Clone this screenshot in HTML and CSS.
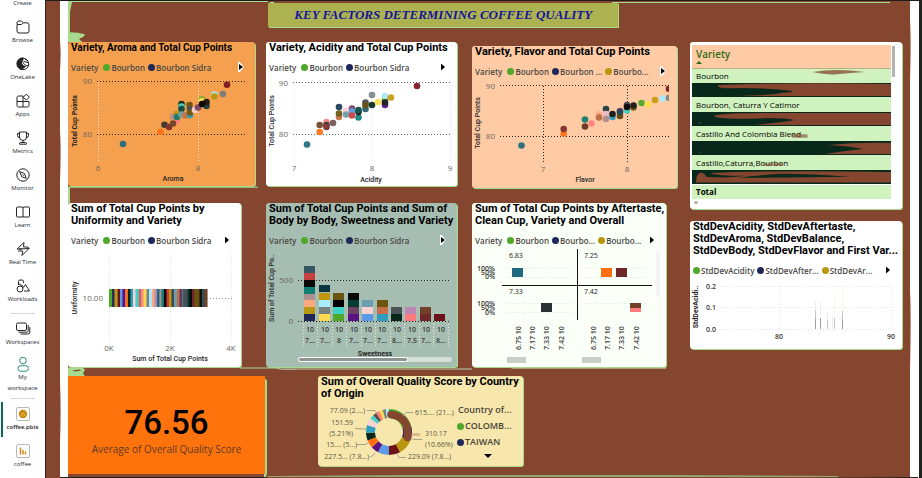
FILE: index.html
```html
<!DOCTYPE html>
<html lang="en">
<head>
<meta charset="utf-8">
<title>Key factors determining coffee quality</title>
<link rel="stylesheet" href="styles.css">
</head>
<body>
<nav class="rail" aria-label="Main">
  <a class="item first" href="#">Create</a>
  <a class="item" href="#"><svg viewBox="0 0 16 16"><path d="M2 5V4a2 2 0 0 1 2-2h2.500l1.800 1.800H12a2 2 0 0 1 2 2V12a2 2 0 0 1-2 2H4a2 2 0 0 1-2-2V5.500h4.500l1.800-1.700"/></svg>Browse</a>
  <a class="item" href="#"><svg viewBox="0 0 16 16"><circle cx="8" cy="8" r="5.700"/><path class="solid" d="M2 8.500C1.500 4 5 1.500 8.500 2L6.500 5c-.5 3 1 5 4 5.500l-4 3C4 13 2.300 11 2 8.500z"/><path d="M8 2.500c-1 4 1 7 5.500 7.500M10 3l2.500 1.500M9 5.500l4 1"/></svg>OneLake</a>
  <a class="item" href="#"><svg viewBox="0 0 16 16"><path d="M8 14H3.500A1.500 1.500 0 0 1 2 12.500v-8A1.500 1.500 0 0 1 3.500 3H8v11h4.500a1.500 1.500 0 0 0 1.500-1.500V8.500H2M11.300 1.200l3 3-3 3-3-3z"/></svg>Apps</a>
  <a class="item" href="#"><svg viewBox="0 0 16 16"><path d="M4.500 2h7v5a3.500 3.500 0 0 1-7 0zM4.500 3.500h-2v2a2.500 2.500 0 0 0 2.200 2.300M11.500 3.500h2v2a2.500 2.500 0 0 1-2.200 2.300M8 10.500v2M4.500 14.200v-.4a1.300 1.300 0 0 1 1.300-1.300h4.400a1.300 1.300 0 0 1 1.300 1.300v.4z"/></svg>Metrics</a>
  <a class="item" href="#"><svg viewBox="0 0 16 16"><circle cx="8" cy="8" r="6.200"/><path d="M4.700 4.700l4.600 1.600 2 5-4.600-1.600zM7.300 7.300l1.400 1.400"/></svg>Monitor</a>
  <a class="item" href="#"><svg viewBox="0 0 16 16"><path d="M8 3.500V13H2.500a1 1 0 0 1-1-1V4a1 1 0 0 1 1-1H7l1 .5 1-.5h4.500a1 1 0 0 1 1 1v8a1 1 0 0 1-1 1H8"/></svg>Learn</a>
  <a class="item" href="#"><svg viewBox="0 0 16 16"><path d="M9 1.500L2 8h4.500l-2 0L14 7.500 7 14.500l.7-4.500H3M9 1.500L8.500 6H13l1 1.500"/></svg>Real Time</a>
  <a class="item last" href="#"><svg viewBox="0 0 16 16"><circle cx="5" cy="11" r="3"/><path d="M3.500 7V3.500A1.500 1.500 0 0 1 5 2h2a1.500 1.500 0 0 1 1.500 1.500V5M10.500 6.500l4 6.500H9M10.500 6.500L8.500 9.500M3.500 5.500l5 3"/></svg>Workloads</a>
  <a class="item ruled" href="#"><svg viewBox="0 0 16 16"><rect x="1.500" y="2" width="10" height="7.500" rx="1.500"/><path d="M13.200 4v5.500a1.700 1.700 0 0 1-1.700 1.700H3.500M14.800 6v5a2 2 0 0 1-2 2H5.500"/></svg>Workspaces</a>
  <a class="item" href="#"><svg class="teal" viewBox="0 0 16 16"><circle cx="8" cy="4.500" r="3.300"/><rect x="3" y="9.700" width="10.500" height="5.500" rx="2.700"/></svg>My<br>workspace</a>
  <a class="item ruled current" href="#"><svg viewBox="0 0 16 16"><rect class="tile" x="1.500" y="1.500" width="13" height="13" rx="1.500"/><circle cx="8" cy="8" r="4.200" fill="#c8860d" stroke="none"/><path d="M5.500 9.500l4-3.500M8 10.500l2.500-2" stroke="#f3c95f"/></svg>coffee.pbix</a>
  <a class="item" href="#"><svg viewBox="0 0 16 16"><rect class="tile" x="1.500" y="1.500" width="13" height="13" rx="1.500"/><path d="M5.500 4.500v7M8 7v4.500M10.500 8.500v3" stroke="#d08a1c" stroke-width="1.500"/></svg>coffee</a>
</nav>

<main class="report">
  <svg class="paint" viewBox="46 0 876 478" preserveAspectRatio="none" aria-hidden="true">
    <rect x="46" y="0" width="876" height="478" fill="#85462f"/>
    <path d="M60 1h8v474h-8z" fill="#fff"/>
    <path d="M910 1h9v475h-9z" fill="#fff"/>
    <path d="M919 0h3v478h-3z" fill="#202320"/>
    <path d="M46 0h876v1H46z" fill="#231c1a"/>
    <path d="M68 1h200v1H72l-2 10v20q8 0 15 2-1 3-5 4-2 1 3 4H68zM270 2h4v2h-4zM612 2h278v1H618l-2 4q0 1-2 0z" fill="#a6db8e"/>
    <path d="M68 186h190v1H70v16h-2zM68 366h14l3 2-2 4 3 4H68zM240 366h37q0-1 3 0v1H240zM265 377l2 2v92l-1 4h-2V377z" fill="#a6db8e"/>
    <path d="M277 367h25l170 0v1H300q-20 1-25-1z" fill="#b7cfae"/>
    <path d="M510 366h156v1H512z" fill="#d9f3cf"/>
    <path d="M72 369l8-1 1 1-6 1z" fill="#85462f"/>
    <path d="M60 475h204l4 1h540l110-1v1l-110 2H260l-20-1H62z" fill="#231c1a"/>
    <path d="M268 474l140-1 250 0 180 1v1H268z" fill="#93a873"/>
    <path d="M60 40q2 14 0 30zM60 130q2 20 0 50zM60 380q2 30 0 60zM910 20q2 20 0 60zM910 290q2 20 0 80z" fill="#c98f80"/>
  </svg>

  <h1 class="banner">KEY FACTORS DETERMINING COFFEE QUALITY</h1>

  <div class="board">
    <div class="left">
      <div class="row top">
        <section class="panel orange">
          <h2 class="compact">Variety, Aroma and Total Cup Points</h2>
          <div class="legend"><span class="name">Variety</span><span class="key green">Bourbon</span><span class="key navy">Bourbon Sidra</span><button class="next halo" aria-label="Next"></button></div>
          <svg class="chart" viewBox="68 73 187 113">
            <path class="grid dark" d="M97 81.500h150M97 134.500h150"/><path class="grid light" d="M98.500 82v80M198.500 82v80"/>
            <text x="92" y="84" class="tick end">90</text><text x="92" y="137" class="tick end">80</text>
            <text x="98" y="171" class="tick mid">6</text><text x="198" y="171" class="tick mid">8</text>
            <text x="173" y="181" class="axis mid">Aroma</text><text class="axis mid bold" transform="translate(77 121) rotate(-90)">Total Cup Points</text>
            <g class="dots">
            <circle cx="123" cy="144" r="3.300" fill="#1f6a80"/><circle cx="160.500" cy="131.700" r="3.300" fill="#ff6f0f"/><circle cx="164.500" cy="124.700" r="3.300" fill="#333"/><circle cx="169" cy="127" r="3.300" fill="#7a2a2a"/><circle cx="177" cy="121" r="3.300" fill="#ff8080"/><circle cx="173" cy="123.500" r="3.300" fill="#704028"/><circle cx="173" cy="116.500" r="3.300" fill="#b59090"/><circle cx="176.500" cy="114" r="3.300" fill="#b8960f"/><circle cx="177" cy="117" r="3.300" fill="#107a6e"/><circle cx="181.500" cy="104" r="3.300" fill="#07281a"/><circle cx="181.500" cy="106.500" r="3.300" fill="#3dcfc0"/><circle cx="181.500" cy="109" r="3.300" fill="#034a42"/><circle cx="181.500" cy="114.500" r="3.300" fill="#6b9ba8"/><circle cx="185.500" cy="115.500" r="3.300" fill="#c86e44"/><circle cx="190" cy="115" r="3.300" fill="#239cc4"/><circle cx="189.500" cy="105" r="3.300" fill="#6a5410"/><circle cx="190" cy="109.500" r="3.300" fill="#34495e"/><circle cx="190" cy="112.500" r="3.300" fill="#6a5410"/><circle cx="195" cy="110" r="3.300" fill="#ffd2d2"/><circle cx="198" cy="107.500" r="3.300" fill="#73406a"/><circle cx="202" cy="99.500" r="3.300" fill="#4fa82a"/><circle cx="202" cy="101" r="3.300" fill="#ffe14a"/><circle cx="206.500" cy="106" r="3.300" fill="#173b40"/><circle cx="206.500" cy="102" r="3.300" fill="#111"/><circle cx="202" cy="104" r="3.300" fill="#000"/><circle cx="214.500" cy="94.500" r="3.300" fill="#a8e8f5"/><circle cx="214.500" cy="96.500" r="3.300" fill="#b8960f"/><circle cx="223" cy="94" r="3.300" fill="#7a7a7a"/><circle cx="227" cy="84.700" r="3.300" fill="#7a1420"/>
            </g>
          </svg>
        </section>
        <section class="panel white">
          <h2>Variety, Acidity and Total Cup Points</h2>
          <div class="legend"><span class="name">Variety</span><span class="key green">Bourbon</span><span class="key navy">Bourbon Sidra</span><button class="next" aria-label="Next"></button></div>
          <svg class="chart" viewBox="266 73 191 113">
            <path class="grid dark" d="M293 82.500h157M293 134.500h157" stroke-opacity=".7"/><path class="grid faint" d="M294.500 82v80M372.500 82v80M450.500 82v80"/>
            <text x="288" y="86" class="tick end">90</text><text x="288" y="137" class="tick end">80</text>
            <text x="294" y="171" class="tick mid">7</text><text x="372" y="171" class="tick mid">8</text><text x="450" y="171" class="tick mid">9</text>
            <text x="371" y="182" class="axis mid">Acidity</text><text class="axis mid" transform="translate(274 121) rotate(-90)">Total Cup Points</text>
            <g class="dots">
            <circle cx="307" cy="144.500" r="3.300" fill="#1f6a80"/><circle cx="319.700" cy="132" r="3.300" fill="#ff6f0f"/><circle cx="319.700" cy="125" r="3.300" fill="#704028"/><circle cx="326.500" cy="122" r="3.300" fill="#ff8080"/><circle cx="326.500" cy="125" r="3.300" fill="#333"/><circle cx="326.500" cy="127" r="3.300" fill="#7a2a2a"/><circle cx="333" cy="123" r="3.300" fill="#6e5454"/><circle cx="339" cy="117" r="3.300" fill="#c86e44"/><circle cx="339" cy="107" r="3.300" fill="#173b50"/><circle cx="339" cy="113.500" r="3.300" fill="#6a5410"/><circle cx="346" cy="110.500" r="3.300" fill="#ffd2d2"/><circle cx="346" cy="114.500" r="3.300" fill="#6b9ba8"/><circle cx="352" cy="108.500" r="3.300" fill="#73406a"/><circle cx="352" cy="111.500" r="3.300" fill="#5894dc"/><circle cx="352" cy="115.500" r="3.300" fill="#c83a3f"/><circle cx="358.500" cy="117.500" r="3.300" fill="#0d8078"/><circle cx="358.500" cy="112" r="3.300" fill="#111"/><circle cx="358.500" cy="110" r="3.300" fill="#034a42"/><circle cx="365.500" cy="102.500" r="3.300" fill="#444a50"/><circle cx="365.500" cy="109" r="3.300" fill="#235a68"/><circle cx="365.500" cy="105" r="3.300" fill="#5a4208"/><circle cx="372" cy="95" r="3.300" fill="#7d8488"/><circle cx="372" cy="105" r="3.300" fill="#07281a"/><circle cx="378" cy="102" r="3.300" fill="#ffe14a"/><circle cx="385" cy="99.500" r="3.300" fill="#4fa82a"/><circle cx="385" cy="96" r="3.300" fill="#a8e8f5"/><circle cx="385" cy="105" r="3.300" fill="#551080"/><circle cx="385" cy="102.500" r="3.300" fill="#111"/><circle cx="391" cy="97.500" r="3.300" fill="#c89a0f"/><circle cx="417" cy="86" r="3.300" fill="#7a1420"/>
            </g>
          </svg>
        </section>
        <section class="panel peach">
          <h2>Variety, Flavor and Total Cup Points</h2>
          <div class="legend"><span class="name">Variety</span><span class="key green">Bourbon</span><span class="key navy">Bourbon ...</span><span class="key gold">Bourbo...</span><button class="next halo" aria-label="Next"></button></div>
          <svg class="chart" viewBox="472 77 205 111">
            <path class="grid dark" d="M500 85.500h169M500 136.500h169M543.500 86v78M627.500 86v78"/>
            <text x="495" y="89" class="tick end">90</text><text x="495" y="139" class="tick end">80</text>
            <text x="543" y="172" class="tick mid">7</text><text x="627" y="172" class="tick mid">8</text>
            <text x="585" y="182" class="axis mid">Flavor</text><text class="axis mid" transform="translate(480 123) rotate(-90)">Total Cup Points</text>
            <svg x="472" y="77" width="197" height="100" viewBox="472 77 197 100"><g class="dots">
            <circle cx="521.500" cy="145.500" r="3.300" fill="#1f6a80"/><circle cx="563.700" cy="133.500" r="3.300" fill="#ff6f0f"/><circle cx="563.700" cy="129" r="3.300" fill="#7a2a2a"/><circle cx="585" cy="119.500" r="3.300" fill="#107a6e"/><circle cx="585" cy="126.500" r="3.300" fill="#5f3020"/><circle cx="591.500" cy="123.500" r="3.300" fill="#ff8080"/><circle cx="599" cy="114.500" r="3.300" fill="#ffa480"/><circle cx="599" cy="117.500" r="3.300" fill="#b8683f"/><circle cx="606" cy="109" r="3.300" fill="#173b40"/><circle cx="606" cy="114" r="3.300" fill="#e3bccc"/><circle cx="606" cy="119" r="3.300" fill="#ad8b8f"/><circle cx="612.500" cy="117" r="3.300" fill="#239cc4"/><circle cx="612.500" cy="114" r="3.300" fill="#111"/><circle cx="620" cy="111" r="3.300" fill="#73406a"/><circle cx="620" cy="116" r="3.300" fill="#5a4208"/><circle cx="620" cy="112" r="3.300" fill="#173b50"/><circle cx="627" cy="110.500" r="3.300" fill="#3dcfc0"/><circle cx="627" cy="105" r="3.300" fill="#445"/><circle cx="627" cy="107" r="3.300" fill="#000"/><circle cx="633.500" cy="107.500" r="3.300" fill="#6a5410"/><circle cx="633.500" cy="105.500" r="3.300" fill="#111"/><circle cx="641.500" cy="103" r="3.300" fill="#4fa82a"/><circle cx="648" cy="104.500" r="3.300" fill="#ffe14a"/><circle cx="655" cy="100" r="3.300" fill="#c89a0f"/><circle cx="662.500" cy="98.500" r="3.300" fill="#a8ecff"/><circle cx="669" cy="98" r="3.300" fill="#7d8488"/><circle cx="669" cy="88.700" r="3.300" fill="#7a1420"/>
            </g></svg>
          </svg>
        </section>
      </div>

      <div class="row middle">
        <section class="panel white narrow">
          <h2>Sum of Total Cup Points by<br>Uniformity and Variety</h2>
          <div class="legend"><span class="name">Variety</span><span class="key green">Bourbon</span><span class="key navy">Bourbon Sidra</span><button class="next" aria-label="Next"></button></div>
          <svg class="chart" viewBox="68 246 173 121">
            <path class="grid faint" d="M109.500 254v88M170.500 254v88M231.500 254v88"/><path class="grid dark" d="M207 298.500h25" stroke-opacity=".5"/>
            <text x="103" y="301" class="tick end">10.00</text>
            <text x="109" y="351" class="tick mid">0K</text><text x="170" y="351" class="tick mid">2K</text><text x="231" y="351" class="tick mid">4K</text>
            <text x="170" y="361" class="axis mid">Sum of Total Cup Points</text><text class="axis mid" transform="translate(77 298) rotate(-90)">Uniformity</text>
            <g stroke-width="3.100" fill="none">
            <path stroke="#4fa82a" d="M110.500 289v18"/><path stroke="#1f2858" d="M113.600 289v18"/><path stroke="#b8960f" d="M116 289v18"/><path stroke="#6e1018" d="M119 289v18"/><path stroke="#5b9ae6" d="M121.600 289v18"/><path stroke="#5a1280" d="M124 289v18"/><path stroke="#ff6f0f" d="M127 289v18"/><path stroke="#07281a" d="M129.500 289v18"/><path stroke="#2c9cc0" d="M132 289v18"/><path stroke="#fad2d2" d="M134.500 289v18"/><path stroke="#40d2c8" d="M137 289v18"/><path stroke="#b06a68" d="M140 289v18"/><path stroke="#ff8a80" d="M142.500 289v18"/><path stroke="#ffd94d" d="M145 289v18"/><path stroke="#777f80" d="M148 289v18"/><path stroke="#a9e9fa" d="M150.500 289v18"/><path stroke="#ffa880" d="M153.500 289v18"/><path stroke="#b88ab0" d="M156 289v18"/><path stroke="#1f6a80" d="M158.500 289v18"/><path stroke="#ad9090" d="M161 289v18"/><path stroke="#108074" d="M163 289v18"/><path stroke="#080808" d="M165.500 289v18"/><path stroke="#c83a3f" d="M168 289v18"/><path stroke="#c0960f" d="M170.500 289v18"/><path stroke="#364c58" d="M173 289v18"/><path stroke="#6aa0ac" d="M176 289v18"/><path stroke="#c86e4a" d="M178.500 289v18"/><path stroke="#5e3c60" d="M181 289v18"/><path stroke="#3b5860" d="M184 289v18"/><path stroke="#4e4e52" d="M186.500 289v18"/><path stroke="#033c35" d="M189 289v18"/><path stroke="#080808" d="M191 289v18"/><path stroke="#6c2a28" d="M193.500 289v18"/><path stroke="#6a5410" d="M196 289v18"/><path stroke="#6a5410" d="M198.500 289v18"/><path stroke="#111" d="M201 289v18"/><path stroke="#345058" d="M203.500 289v18"/><path stroke="#704028" d="M206 289v18"/>
            </g>
          </svg>
        </section>
        <section class="panel sage">
          <h2>Sum of Total Cup Points and Sum of<br>Body by Body, Sweetness and Variety</h2>
          <div class="legend"><span class="name">Variety</span><span class="key green">Bourbon</span><span class="key navy">Bourbon Sidra</span><button class="next halo" aria-label="Next"></button></div>
          <svg class="chart" viewBox="266 246 191 121">
            <path class="grid dark" d="M298 280.500h153M298 321.500h153"/>
            <path class="grid light" d="M303.500 324v24M317.500 324v24M332.500 324v24M346.500 324v24M361.500 324v24M375.500 324v24M390.500 324v24M404.500 324v24M419.500 324v24M433.500 324v24M448.500 324v24"/>
            <text x="293" y="283" class="tick end">500</text><text x="293" y="324" class="tick end">0</text>
            <text class="axis mid" transform="translate(274 288) rotate(-90)">Sum of Total Cup Po..</text>
            <path fill="#1f2858" d="M304 314h11v7h-11z"/><path fill="#b8960f" d="M304 307h11v7h-11z"/><path fill="#ffa880" d="M304 300h11v7h-11z"/><path fill="#ad9090" d="M304 294h11v6h-11z"/><path fill="#108074" d="M304 287h11v7h-11z"/><path fill="#080808" d="M304 280h11v7h-11z"/><path fill="#c83f42" d="M304 273h11v7h-11z"/><path fill="#345860" d="M304 266h11v7h-11z"/>
            <path fill="#ffd94d" d="M319 314h11v7h-11z"/><path fill="#777f80" d="M319 307h11v7h-11z"/><path fill="#a8ecff" d="M319 300h11v7h-11z"/><path fill="#c0960f" d="M319 293h11v7h-11z"/><path fill="#0b3440" d="M319 285h11v7h-11z"/>
            <path fill="#4fa82a" d="M333 314h11v7h-11z"/><path fill="#40d2c8" d="M333 307h11v7h-11z"/><path fill="#000" d="M333 300h11v7h-11z"/><path fill="#6a5410" d="M333 293h11v7h-11z"/>
            <path fill="#5a1280" d="M348 314h11v7h-11z"/><path fill="#6e4263" d="M348 307h11v7h-11z"/><path fill="#033c35" d="M348 300h11v7h-11z"/><path fill="#080808" d="M348 293h11v7h-11z"/>
            <path fill="#5b9ae6" d="M362 314h11v7h-11z"/><path fill="#fad2d2" d="M362 307h11v7h-11z"/><path fill="#6aa0b2" d="M362 300h11v7h-11z"/>
            <path fill="#2c9cc0" d="M377 314h11v7h-11z"/><path fill="#c86e4a" d="M377 307h11v7h-11z"/><path fill="#6a5410" d="M377 300h11v7h-11z"/>
            <path fill="#07281a" d="M391 314h11v7h-11z"/><path fill="#4b5459" d="M391 307h11v7h-11z"/>
            <path fill="#ff7a7a" d="M405 314h11v7h-11z"/><path fill="#be86b4" d="M405 307h11v7h-11z"/>
            <path fill="#6e2628" d="M420 314h11v7h-11z"/><path fill="#704028" d="M420 307h11v7h-11z"/>
            <path fill="#6e1018" d="M434 314h11v7h-11z"/>
            <g class="tick mid strong"><text x="310" y="332">10</text><text x="325" y="332">10</text><text x="339" y="332">10</text><text x="354" y="332">10</text><text x="368" y="332">10</text><text x="382" y="332">10</text><text x="397" y="332">10</text><text x="412" y="332">10</text><text x="426" y="332">10</text><text x="441" y="332">10</text>
            <text x="310" y="343">7...</text><text x="325" y="343">7...</text><text x="339" y="343">8</text><text x="354" y="343">7...</text><text x="368" y="343">7...</text><text x="382" y="343">7...</text><text x="397" y="343">8...</text><text x="412" y="343">7.5</text><text x="426" y="343">7...</text><text x="441" y="343">8...</text></g>
            <text x="375" y="356" class="axis mid bold">Sweetness</text>
            <rect x="298" y="357" width="154" height="5" rx="2.500" fill="#d5dfd9"/><rect x="298.500" y="357.500" width="109" height="4" rx="2" fill="#8f9592" stroke="#fff"/>
          </svg>
        </section>
        <section class="panel mint">
          <h2>Sum of Total Cup Points by Aftertaste,<br>Clean Cup, Variety and Overall</h2>
          <div class="legend"><span class="name">Variety</span><span class="key green">Bourbon</span><span class="key navy">Bourbo...</span><span class="key gold">Bourbo...</span><button class="next" aria-label="Next"></button></div>
          <svg class="chart" viewBox="472 246 194 121">
            <path d="M502 285.500h150M577.500 249v71" stroke="#111"/>
            <path d="M656 250h4v46h-4z" fill="#f3f5f7"/>
            <g class="tick small"><text x="509" y="258">6.83</text><text x="584" y="258">7.25</text><text x="509" y="294">7.33</text><text x="584" y="294">7.42</text></g>
            <g class="tick end strong"><text x="495" y="271">100%</text><text x="495" y="275">50%</text><text x="495" y="279">0%</text><text x="495" y="306">100%</text><text x="495" y="310">50%</text><text x="495" y="315">0%</text></g>
            <path class="grid faint" d="M507 268.500h65M507 277.500h65M582 268.500h65M582 277.500h65M507 303.500h65M507 312.500h65M582 303.500h65"/>
            <path d="M512 268h11v9h-11z" fill="#1f6a80"/><path d="M601 268h11v9h-11z" fill="#ff6f0f"/><path d="M616 268h11v9h-11z" fill="#6e2628"/><path d="M541 303h11v9h-11z" fill="#2b3234"/><path d="M630 303h11v5h-11z" fill="#704028"/><path d="M630 308h11v4h-11z" fill="#ff7a7a"/>
            <g class="tick strong"><text transform="translate(521 350) rotate(-90)">6.75 10</text><text transform="translate(535 350) rotate(-90)">7.17 10</text><text transform="translate(549 350) rotate(-90)">7.33 10</text><text transform="translate(564 350) rotate(-90)">7.42 10</text><text transform="translate(596 350) rotate(-90)">6.75 10</text><text transform="translate(610 350) rotate(-90)">7.17 10</text><text transform="translate(624 350) rotate(-90)">7.33 10</text><text transform="translate(639 350) rotate(-90)">7.42 10</text></g>
            <path d="M507 357h19v6h-19zM582 357h19v6h-19z" fill="#c9cdc8"/>
          </svg>
        </section>
      </div>

      <div class="row bottom">
        <section class="score">
          <strong>76.56</strong>
          <span>Average of Overall Quality Score</span>
        </section>
        <section class="panel cream">
          <h2>Sum of Overall Quality Score by Country<br>of Origin</h2>
          <div class="donut">
            <svg class="chart" viewBox="318 401 139 66">
              <g fill="none" stroke-width="9" transform="rotate(-90 389 433)">
                <circle pathLength="100" cx="389" cy="433" r="18.500" stroke="#4fa82a" stroke-dasharray="21.200 100"/>
                <circle pathLength="100" cx="389" cy="433" r="18.500" stroke="#1f2858" stroke-dasharray="10 100" stroke-dashoffset="-21"/>
                <circle pathLength="100" cx="389" cy="433" r="18.500" stroke="#b8960f" stroke-dasharray="11 100" stroke-dashoffset="-31"/>
                <circle pathLength="100" cx="389" cy="433" r="18.500" stroke="#6e1018" stroke-dasharray="8 100" stroke-dashoffset="-42"/>
                <circle pathLength="100" cx="389" cy="433" r="18.500" stroke="#5b9ae6" stroke-dasharray="8 100" stroke-dashoffset="-50"/>
                <circle pathLength="100" cx="389" cy="433" r="18.500" stroke="#5a1280" stroke-dasharray="5.500 100" stroke-dashoffset="-58"/>
                <circle pathLength="100" cx="389" cy="433" r="18.500" stroke="#ff6f0f" stroke-dasharray="5.500 100" stroke-dashoffset="-63.500"/>
                <circle pathLength="100" cx="389" cy="433" r="18.500" stroke="#07281a" stroke-dasharray="5.500 100" stroke-dashoffset="-69"/>
                <circle pathLength="100" cx="389" cy="433" r="18.500" stroke="#2c9cc0" stroke-dasharray="5.500 100" stroke-dashoffset="-74.500"/>
                <circle pathLength="100" cx="389" cy="433" r="18.500" stroke="#fad2d2" stroke-dasharray="5 100" stroke-dashoffset="-80"/>
                <circle pathLength="100" cx="389" cy="433" r="18.500" stroke="#40d2c8" stroke-dasharray="3 100" stroke-dashoffset="-85"/>
                <circle pathLength="100" cx="389" cy="433" r="18.500" stroke="#5c4a4a" stroke-dasharray="2.500 100" stroke-dashoffset="-88"/>
                <circle pathLength="100" cx="389" cy="433" r="18.500" stroke="#ff7a7a" stroke-dasharray="2.500 100" stroke-dashoffset="-90.500"/>
                <circle pathLength="100" cx="389" cy="433" r="18.500" stroke="#ffd94d" stroke-dasharray="2.500 100" stroke-dashoffset="-93"/>
                <circle pathLength="100" cx="389" cy="433" r="18.500" stroke="#777f80" stroke-dasharray="2.200 100" stroke-dashoffset="-95.500"/>
                <circle pathLength="100" cx="389" cy="433" r="18.500" stroke="#a8ecff" stroke-dasharray="2.300 100" stroke-dashoffset="-97.700"/>
              </g>
              <path d="M391 415.500q14 2 16.500 14v9" fill="none" stroke="#85462f" stroke-width="7.500" stroke-linecap="round"/>
              <path d="M413 435.500h6" stroke="#d9a384" stroke-width="3" stroke-linecap="round" opacity=".7"/>
              <path d="M367 411.500h8l2 3M403 417l3-3.500h7M355 429.500l11 .5M411 439l3 1.500h8M357 445.500h8l3-1.500M370 458l3-1.500 2-3M397 455l2 3.500h7" fill="none" stroke="#a8a08a"/>
              <g class="callout"><text x="365" y="414" class="end">77.09 (2....)</text><text x="353" y="426" class="end">151.59</text><text x="353" y="437" class="end">(5.21%)</text><text x="357" y="448" class="end">15.... (5...)</text><text x="369" y="460" class="end">227.5... (7.8...)</text><text x="415" y="416">615.... (21...)</text><text x="425" y="437">310.17</text><text x="425" y="448">(10.66%)</text><text x="408" y="460">229.09 (7.8...)</text></g>
            </svg>
            <div class="countries">
              <span class="name">Country of...</span>
              <span class="key green">COLOMB...</span>
              <span class="key navy">TAIWAN</span>
              <button class="next down" aria-label="More"></button>
            </div>
          </div>
        </section>
      </div>
    </div>

    <div class="right">
      <section class="panel tablebox">
        <table>
          <thead><tr><th scope="col">Variety<svg viewBox="0 0 6 3"><path d="M0 3l3-3 3 3z" fill="#2f6b16"/></svg></th></tr></thead>
          <tbody>
            <tr><td><span>Bourbon</span><svg class="smear" viewBox="692 68 198 14" preserveAspectRatio="none"><path d="M812 71q22-4 52 0-14 1-28 2-10 1-24-2z" fill="#85462f" opacity=".75"/></svg></td></tr>
            <tr class="ink"><td><svg class="smear" viewBox="0 0 198 14" preserveAspectRatio="none"><path d="M26 2q80-3 172-1v12H36q50-1 52-3 14-1 12-2-20-3-54-3-22 1-20-3z" fill="#85462f"/></svg></td></tr>
            <tr><td><span>Bourbon, Caturra Y Catimor</span></td></tr>
            <tr class="ink"><td><svg class="smear" viewBox="0 0 198 14" preserveAspectRatio="none"><path d="M22 4q4-3 64-3h112v12H62q30-3 40-5-8-2-26-2-52 2-54-2zM8 12q-2-2 1-2z" fill="#85462f"/></svg></td></tr>
            <tr><td><span>Castillo And Colombia Blend</span><svg class="smear" viewBox="0 0 198 14" preserveAspectRatio="none"><path d="M98 8q10-1 17 0v3h-15z" fill="#85462f" opacity=".6"/></svg></td></tr>
            <tr class="ink"><td><svg class="smear" viewBox="0 0 198 14" preserveAspectRatio="none"><path d="M136 4q30-3 62-2v11h-66q26-4 38-5-12-3-34-4zM7 12q0-2 2-1z" fill="#85462f"/></svg></td></tr>
            <tr><td><span>Castillo,Caturra,Bourbon</span><svg class="smear" viewBox="0 0 198 14" preserveAspectRatio="none"><path d="M70 8h20v2H72z" fill="#85462f" opacity=".6"/></svg></td></tr>
            <tr class="ink"><td><svg class="smear" viewBox="0 0 198 14" preserveAspectRatio="none"><path d="M4 13q0-11 6-10 4 1 4 4 20 2 40-1-30 0-36-3 60-3 180-1v11z" fill="#85462f"/><path d="M48 8q50 0 110-1-40-3-70-3-30 2-40 4z" fill="#07281a"/></svg></td></tr>
          </tbody>
          <tfoot><tr><th scope="row">Total</th></tr></tfoot>
        </table>
        <span class="bar"></span>
        <span class="knob"></span>
      </section>
      <section class="panel white">
        <h2>StdDevAcidity, StdDevAftertaste,<br>StdDevAroma, StdDevBalance,<br>StdDevBody, StdDevFlavor and First Var...</h2>
        <div class="legend"><span class="key green">StdDevAcidity</span><span class="key navy">StdDevAfter...</span><span class="key gold">StdDevAr...</span><button class="next" aria-label="Next"></button></div>
        <svg class="chart" viewBox="690 276 212 73">
          <path class="grid faint" d="M721 286.500h171M721 307.500h171M721 329.500h171M779.500 286v44M891.500 286v44"/>
          <g class="tick strong end"><text x="716" y="289">0.2</text><text x="716" y="310">0.1</text><text x="716" y="332">0.0</text></g>
          <g class="tick strong mid"><text x="779" y="339">80</text><text x="891" y="339">90</text></g>
          <text class="axis mid bold" transform="translate(698 307) rotate(-90)">StdDevAcidi..</text>
          <path d="M815.500 302v8M820.500 302v14M827.500 312v8" stroke="#f0eaf6"/><path d="M834.500 292v24M842.500 287v24" stroke="#fbf8e2"/><path d="M832.500 316v12" stroke="#e8f4e8"/>
          <path d="M815.500 310v9M842.500 311v10M827.500 320v9M834.500 318v11" stroke="#c9c5c8"/><path d="M815.500 319v10M842.500 319v10M820.500 318v11" stroke="#a39aa4"/>
        </svg>
      </section>
    </div>
  </div>
</main>
</body>
</html>
```
FILE: styles.css
```css
* {
  box-sizing: border-box;
}

body {
  margin: 0;
  display: flex;
  min-height: 100vh;
  overflow: hidden;
  font-family: "Open Sans", "Noto Sans", sans-serif;
  font-size: 8px;
  color: #252423;
}

button {
  padding: 0;
  border: 0;
  background: none;
}

/* navigation rail */
.rail {
  flex: 0 0 46px;
  display: flex;
  flex-direction: column;
  border-right: 1px solid #2a2220;
  background: #fff;
}

.item {
  position: relative;
  display: block;
  margin-bottom: 10px;
  font-size: 6px;
  line-height: 11px;
  text-align: center;
  text-decoration: none;
  color: #24282e;
}

.item.first {
  margin-top: -2px;
}

.item.last {
  margin-bottom: 8px;
}

.item svg {
  display: block;
  width: 16px;
  height: 16px;
  margin: 0 auto;
  fill: none;
  stroke: #242424;
  stroke-width: 1;
}

.item .solid {
  fill: #242424;
}

.item svg.teal {
  stroke: #2b8a78;
}

.item .tile {
  fill: #fff;
  stroke: #b8b8b8;
}

.item.ruled {
  padding-top: 8px;
}

.item.ruled::after {
  content: "";
  position: absolute;
  top: 0;
  left: 11px;
  right: 10px;
  border-top: 1px solid #d6d6d6;
}

.item.ruled:not(.current) {
  margin-bottom: 8px;
}

.item:has(.teal) {
  margin-bottom: 4px;
}

.item.current {
  font-weight: 600;
  color: #1b1b1b;
}

.item.current::before {
  content: "";
  position: absolute;
  top: 4px;
  bottom: -4px;
  left: 1px;
  width: 2px;
  background: #0b6a55;
}

/* report canvas */
.report {
  position: relative;
  flex: 1;
  min-width: 0;
  padding: 3px 20px 0 22px;
}

.paint {
  position: absolute;
  inset: 0;
  width: 100%;
  height: 100%;
}

.banner {
  position: relative;
  width: 42%;
  margin: 0 0 15px 24%;
  background: #acb24f;
  box-shadow: 1px 1px 0 #a6db8e;
  font: italic bold 13px/24px "Liberation Serif", serif;
  text-align: center;
  white-space: nowrap;
  color: #14149a;
}

.board {
  position: relative;
  display: flex;
}

.left {
  flex: 622 1 0;
  min-width: 0;
}

.right {
  flex: 212 1 0;
  min-width: 0;
  display: flex;
  flex-direction: column;
  gap: 12px;
}

.row {
  display: grid;
  grid-template-columns: 198fr 206fr 218fr;
  align-items: start;
}

.row.top > :nth-child(1) {
  margin-right: 11px;
}

.row.top > :nth-child(2),
.row.middle > :nth-child(2) {
  margin-right: 15px;
}

.row.top > :nth-child(3) {
  margin-top: 4px;
  margin-right: 13px;
}

.row.middle > :nth-child(3) {
  margin-right: 24px;
}

.row.middle > .narrow {
  margin-right: 25px;
}

.row.middle {
  margin-top: 15px;
}

.row.bottom {
  display: flex;
  gap: 53px;
  margin-top: 9px;
}

/* visual panels */
.panel {
  min-width: 0;
  border-radius: 3px;
  box-shadow: 1px 1px 0 #a6db8e;
}

.orange { background: #f4a04e; }
.white { background: #fff; }
.peach { background: #ffcba4; }
.sage { background: #a6bdb1; }
.mint { background: #fafff8; }
.cream { background: #f7e7ad; }

h2 {
  margin: 0;
  padding-left: 3px;
  font: bold 11px/12px Roboto, sans-serif;
  white-space: nowrap;
  color: #000;
}

h2.compact {
  font-size: 10px;
}

.legend {
  display: flex;
  align-items: center;
  gap: 3px;
  height: 12px;
  margin-top: 7px;
  padding: 0 11px 0 3px;
  font-weight: 600;
  white-space: nowrap;
  color: #4a4846;
}

.legend .name {
  margin-right: 2px;
}

.key {
  display: flex;
  align-items: center;
  gap: 1px;
}

.key::before {
  content: "";
  width: 7px;
  height: 7px;
  border-radius: 50%;
  background: var(--dot);
}

.green { --dot: #4fa82a; }
.navy { --dot: #1f2858; }
.gold { --dot: #b8960f; }

.next {
  margin-left: auto;
  width: 6px;
  height: 10px;
  clip-path: polygon(0 0, 30% 0, 100% 50%, 30% 100%, 0 100%);
  background: #000;
}

.next:not(.halo):not(.down) {
  width: 4px;
  height: 7px;
  margin-right: 1px;
  clip-path: polygon(0 0, 100% 50%, 0 100%);
}

.next.halo {
  background: #fff;
  position: relative;
}

.next.halo::after {
  content: "";
  position: absolute;
  inset: 2px 1px 2px 1px;
  clip-path: polygon(0 0, 100% 50%, 0 100%);
  background: #000;
}

.chart {
  display: block;
  width: 100%;
  height: auto;
}

.grid {
  fill: none;
  stroke-dasharray: 1 2;
}

.grid.dark { stroke: #2a2420; }
.grid.light { stroke: #f1e9e0; }
.grid.faint { stroke: #e4e4e4; }

.dots { opacity: 0.92; }

.tick {
  font-size: 8px;
  fill: #6b6762;
}

.tick.strong {
  font-size: 7px;
  font-weight: 600;
  fill: #3b3a38;
}

.tick.small {
  font-size: 7px;
  fill: #252423;
}

.axis {
  font-family: Roboto, sans-serif;
  font-size: 7px;
  font-weight: 500;
  fill: #252423;
}

.axis.bold { font-weight: 700; }
.mid { text-anchor: middle; }
.end { text-anchor: end; }

.callout {
  font-size: 7px;
  fill: #5c5747;
}

/* score card */
.score {
  flex: 197 1 0;
  display: flex;
  flex-direction: column;
  align-items: center;
  padding: 29px 0 17px;
  background: #ff730c;
}

.score strong {
  font: 500 33px/36px Roboto, sans-serif;
  color: #000;
}

.score span {
  font-size: 10px;
  line-height: 16px;
  color: #5c3a24;
}

.cream {
  flex: 205 1 0;
  margin-right: 167px;
  align-self: flex-start;
}

.donut {
  display: flex;
}

.donut .chart {
  flex: 139 1 0;
  min-width: 0;
}

.countries {
  flex: 66 1 0;
  display: flex;
  flex-direction: column;
  align-items: flex-start;
  gap: 4px;
  padding-top: 4px;
  font-size: 9px;
  font-weight: 600;
  line-height: 12px;
  white-space: nowrap;
  color: #4a4538;
}

.countries .name {
  padding-left: 1px;
}

.next.down {
  width: 8px;
  height: 4px;
  margin: 2px auto 0 27px;
  clip-path: polygon(0 0, 100% 0, 50% 100%);
}

/* variety table */
.tablebox {
  position: relative;
  padding: 3px 11px 10px 2px;
  background: #fff;
}

table {
  width: 100%;
  border-collapse: collapse;
  text-align: left;
}

tr, th, td {
  padding: 0;
}

td, tfoot th {
  position: relative;
  height: 15px;
  padding-left: 4px;
  background: #d0f2be;
  font-size: 8px;
  line-height: 14px;
  color: #000;
}

tfoot th {
  border-top: 1px solid #fff;
}

thead th {
  height: 23px;
  padding: 2px 4px;
  border-bottom: 1px solid #b9ae7c;
  background: #ffcba4;
  font-size: 10px;
  font-weight: 600;
  line-height: 13px;
  color: #2f6b16;
}

thead svg {
  display: block;
  width: 6px;
  height: 3px;
}

.ink td {
  height: 14px;
  background: #07281a;
}

.smear {
  position: absolute;
  inset: 0;
  width: 100%;
  height: 100%;
}

.bar {
  position: absolute;
  top: 4px;
  right: 7px;
  width: 3px;
  height: 31px;
  background: #b3b3b3;
}

.knob {
  position: absolute;
  left: 4px;
  bottom: 5px;
  width: 4px;
  height: 3px;
  border-radius: 2px;
  background: #b3b3b3;
}
```
